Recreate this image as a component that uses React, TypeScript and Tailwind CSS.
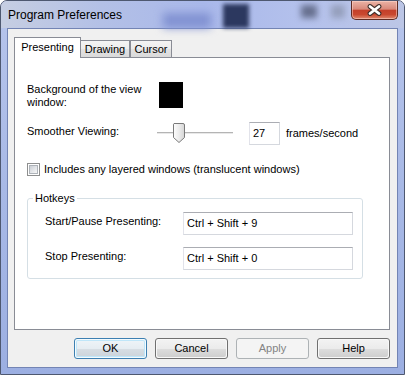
import React from "react";

function Btn({ label, variant }: { label: string; variant?: "default" | "disabled" }) {
  if (variant === "disabled") {
    return (
      <div className="w-[73px] h-[21px] rounded-[3px] border border-[#adb2b5] bg-[#f4f4f4] flex items-center justify-center text-[#838383]">
        {label}
      </div>
    );
  }
  if (variant === "default") {
    return (
      <div className="w-[73px] h-[21px] rounded-[3px] border border-[#3c7fb1] p-[1px] bg-[#f4fbfe]">
        <div className="w-full h-full rounded-[2px] shadow-[inset_0_0_0_1px_#bfe6f9] bg-[linear-gradient(to_bottom,#eef4f8_0%,#e6edf2_50%,#d7dee4_51%,#ccd4db_100%)] flex items-center justify-center">
          {label}
        </div>
      </div>
    );
  }
  return (
    <div className="w-[73px] h-[21px] rounded-[3px] border border-[#707070] p-[1px] bg-[#f8f8f8]">
      <div className="w-full h-full rounded-[2px] bg-[linear-gradient(to_bottom,#f2f2f2_0%,#ebebeb_50%,#dddddd_51%,#cfcfcf_100%)] flex items-center justify-center">
        {label}
      </div>
    </div>
  );
}

function TextBox({ value, className }: { value: string; className: string }) {
  return (
    <div
      className={
        "bg-white border border-[#d5d8de] border-t-[#abadb3] border-l-[#e2e3ea] flex items-center pl-[3px] " +
        className
      }
    >
      {value}
    </div>
  );
}

export default function App() {
  return (
    <div className="w-[405px] h-[375px] flex flex-col overflow-hidden rounded-t-[7px] border border-[#4e5870] bg-[linear-gradient(to_bottom,#b7c5ec_0%,#a8b9e6_50%,#9cafe2_100%)] font-['Liberation_Sans',Arial,sans-serif] text-[11px] text-black">
      {/* Title bar */}
      <div className="relative h-[27px] shrink-0 flex items-start justify-between bg-[linear-gradient(to_right,#c6cee2_0%,#b3c0e6_25%,#a9b8ea_50%,#b4c1ec_75%,#bcc6e6_100%)]">
        <div className="absolute left-[162px] top-[12px] w-[48px] h-[15px] bg-[#8292d2] blur-[4px]" />
        <div className="absolute left-[222px] top-[3px] w-[26px] h-[24px] bg-[#2c385f] blur-[2px]" />
        <div className="absolute left-[300px] top-[4px] w-[16px] h-[13px] bg-[#666f8e] blur-[3px]" />
        <div className="absolute left-[330px] top-[4px] w-[14px] h-[13px] bg-[#959fbc] blur-[3px]" />
        <div className="relative pl-[7px] pt-[7px] text-[12px] leading-[15px] text-[#000]">
          Program Preferences
        </div>
        <div className="relative mr-[6px] w-[47px] h-[19px] rounded-b-[5px] border border-t-0 border-[#5e2c24] bg-[linear-gradient(to_bottom,#ebb3a6_0%,#d8897a_45%,#c4402a_52%,#c9482f_75%,#e08a70_100%)] flex items-center justify-center shadow-[inset_0_0_0_1px_rgba(255,220,210,0.5)]">
          <svg width="15" height="12" viewBox="0 0 15 12">
            <path d="M3 2.5 L12 9.5 M12 2.5 L3 9.5" stroke="#40302c" strokeWidth="4.8" strokeLinecap="round" />
            <path d="M3 2.5 L12 9.5 M12 2.5 L3 9.5" stroke="#ffffff" strokeWidth="2.8" strokeLinecap="round" />
          </svg>
        </div>
      </div>

      {/* Body */}
      <div className="mx-[6px] mb-[6px] h-[340px] border border-[#7384b4] bg-[#f0f0f0] pl-[6px] pr-[7px] pt-[8px] flex flex-col">
        {/* Tabs */}
        <div className="h-[20px] flex items-end">
          <div className="relative z-10 w-[67px] h-[21px] -mb-[1px] bg-white border border-b-0 border-[#898c95] flex items-start justify-center pt-[3px] leading-[13px]">
            Presenting
          </div>
          <div className="w-[50px] h-[17px] -ml-[1px] border border-b-0 border-[#898c95] bg-[linear-gradient(to_bottom,#f4f4f4_0%,#ececec_50%,#e2e2e2_51%,#dadada_100%)] flex items-start justify-center pt-[2px] leading-[13px]">
            Drawing
          </div>
          <div className="w-[42px] h-[17px] border border-b-0 border-[#898c95] bg-[linear-gradient(to_bottom,#f4f4f4_0%,#ececec_50%,#e2e2e2_51%,#dadada_100%)] flex items-start justify-center pt-[2px] leading-[13px]">
            Cursor
          </div>
        </div>

        {/* Panel */}
        <div className="h-[273px] border border-[#898c95] bg-white pl-[12px] pt-[24px] flex flex-col">
          {/* Row 1 */}
          <div className="flex items-start">
            <div className="w-[132px] pt-[1px] pr-[12px] leading-[13px]">Background of the view window:</div>
            <div className="w-[24px] h-[26px] bg-black" />
          </div>

          {/* Row 2 */}
          <div className="mt-[13px] h-[22px] flex items-center">
            <div className="w-[130px] -mt-[3px]">Smoother Viewing:</div>
            <svg width="76" height="22" viewBox="0 0 76 22" className="-mt-[1px]">
              <defs>
                <linearGradient id="thumb" x1="0" y1="0" x2="1" y2="0">
                  <stop offset="0" stopColor="#fdfdfd" />
                  <stop offset="0.5" stopColor="#ececec" />
                  <stop offset="1" stopColor="#d6d6d6" />
                </linearGradient>
              </defs>
              <rect x="0" y="10" width="76" height="1" fill="#b4b4b4" />
              <rect x="0" y="11" width="76" height="1" fill="#e8e8e8" />
              <path
                d="M17 1.5 H26 A1.5 1.5 0 0 1 27.5 3 V15.5 L22 20.5 L16.5 15.5 V3 A1.5 1.5 0 0 1 17 1.5 Z"
                fill="url(#thumb)"
                stroke="#7a7a7a"
                strokeWidth="1"
              />
            </svg>
            <TextBox value="27" className="ml-[16px] w-[31px] h-[23px]" />
            <div className="ml-[6px]">frames/second</div>
          </div>

          {/* Row 3 checkbox */}
          <div className="mt-[19px] flex items-center">
            <div className="w-[13px] h-[13px] border border-[#8e8f8f] bg-white p-[1px] flex">
              <div className="flex-1 border border-[#aeb3b9] bg-[linear-gradient(135deg,#cbcfd5_0%,#e6e8eb_60%,#f7f7f7_100%)]" />
            </div>
            <div className="ml-[4px] leading-[13px]">Includes any layered windows (translucent windows)</div>
          </div>

          {/* Hotkeys group */}
          <fieldset className="mt-[16px] w-[336px] border border-[#d5dfe5] rounded-[3px]">
            <legend className="ml-[5px] px-[2px] leading-[13px]">Hotkeys</legend>
            <div className="pl-[17px] pr-[9px] pt-[7px] pb-[8px] flex flex-col gap-[12px]">
              <div className="flex items-center">
                <div className="w-[138px] -mt-[4px]">Start/Pause Presenting:</div>
                <TextBox value="Ctrl + Shift + 9" className="w-[170px] h-[23px]" />
              </div>
              <div className="flex items-center">
                <div className="w-[138px] -mt-[4px]">Stop Presenting:</div>
                <TextBox value="Ctrl + Shift + 0" className="w-[170px] h-[23px]" />
              </div>
            </div>
          </fieldset>
        </div>

        {/* Buttons */}
        <div className="mt-[8px] flex justify-end gap-[8px]">
          <Btn label="OK" variant="default" />
          <Btn label="Cancel" />
          <Btn label="Apply" variant="disabled" />
          <Btn label="Help" />
        </div>
      </div>
    </div>
  );
}
